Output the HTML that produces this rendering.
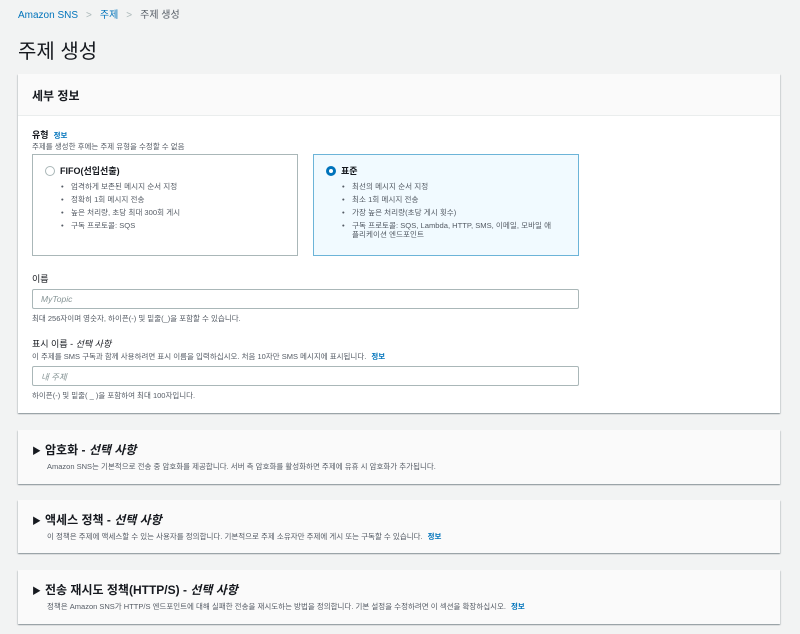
<!DOCTYPE html>
<html><head><meta charset="utf-8"><style>
*{box-sizing:border-box;margin:0;padding:0}
body{width:800px;height:634px;background:#f2f3f3;font-family:"Liberation Sans","Noto Sans CJK KR",sans-serif;color:#16191f;position:relative;overflow:hidden}
.a{position:absolute}
.bc{left:18px;top:6px;font-size:10px;color:#545b64}
.bc .l{color:#0073bb}
.bc .s{color:#aab7b8;margin:0 8px}
h1{position:absolute;left:18px;top:35px;font-size:20px;font-weight:400}
.panel{position:absolute;left:18px;width:762px;background:#fff;box-shadow:0 1px 1px rgba(0,28,36,.3),1px 1px 1px rgba(0,28,36,.1),-1px 1px 1px rgba(0,28,36,.1)}
.hd{height:42px;border-bottom:1px solid #eaeded;padding:13px 14px;font-size:12px;font-weight:700;background:#fafafa}
.lbl{font-size:9px;font-weight:700;color:#16191f}
.desc{font-size:7.5px;color:#545b64}
.info{color:#0073bb;font-weight:700;font-size:7.5px;margin-left:5px}
.card{position:absolute;top:154px;width:266px;height:102px;border:1px solid #aab7b8;background:#fff}
.card.sel{border-color:#6cb4d8;background:#f1faff}
.card .t{position:absolute;left:27px;top:9px;font-size:9px;font-weight:700}
.card ul{position:absolute;left:28px;top:27px;right:12px;font-size:7.6px;color:#545b64;list-style:none;line-height:9px}
.card li{margin-bottom:4px;padding-left:10px;position:relative}
.card li:before{content:"•";position:absolute;left:0}
.rad{position:absolute;left:12px;top:11px;width:10px;height:10px;border-radius:50%;border:1px solid #aab7b8;background:#fff}
.sel .rad{border:3px solid #0073bb}
.inp{position:absolute;left:32px;width:547px;height:20px;border:1px solid #aab7b8;border-radius:2px;background:#fff;font-size:8.5px;font-style:italic;color:#879596;padding:4px 8px}
.cp{position:absolute;left:18px;width:762px;background:#fafafa;box-shadow:0 1px 1px rgba(0,28,36,.3),1px 1px 1px rgba(0,28,36,.1),-1px 1px 1px rgba(0,28,36,.1)}
.cp .t{position:absolute;left:14px;top:11px;font-size:12px;font-weight:700}
.cp .t i{font-style:italic}
.cp .t .tri{font-size:9px;margin-right:4px}
.cp .d{position:absolute;left:29px;font-size:7.5px;color:#545b64}
</style></head><body>
<div class="a bc"><span class="l">Amazon SNS</span><span class="s">&gt;</span><span class="l">주제</span><span class="s">&gt;</span>주제 생성</div>
<h1>주제 생성</h1>
<div class="panel" style="top:74px;height:339px">
<div class="hd">세부 정보</div>
</div>
<div class="a lbl" style="left:32px;top:128px">유형<span class="info">정보</span></div>
<div class="a desc" style="left:32px;top:141px">주제를 생성한 후에는 주제 유형을 수정할 수 없음</div>
<div class="card" style="left:32px"><div class="rad"></div><div class="t">FIFO(선입선출)</div>
<ul><li>엄격하게 보존된 메시지 순서 지정</li><li>정확히 1회 메시지 전송</li><li>높은 처리량, 초당 최대 300회 게시</li><li>구독 프로토콜: SQS</li></ul></div>
<div class="card sel" style="left:313px"><div class="rad"></div><div class="t">표준</div>
<ul><li>최선의 메시지 순서 지정</li><li>최소 1회 메시지 전송</li><li>가장 높은 처리량(초당 게시 횟수)</li><li>구독 프로토콜: SQS, Lambda, HTTP, SMS, 이메일, 모바일 애<br>플리케이션 엔드포인트</li></ul></div>
<div class="a lbl" style="left:32px;top:272px;font-weight:400">이름</div>
<div class="inp" style="top:289px">MyTopic</div>
<div class="a desc" style="left:32px;top:313px">최대 256자이며 영숫자, 하이픈(-) 및 밑줄(_)을 포함할 수 있습니다.</div>
<div class="a lbl" style="left:32px;top:337px;font-weight:400">표시 이름 - <i>선택 사항</i></div>
<div class="a desc" style="left:32px;top:351px">이 주제를 SMS 구독과 함께 사용하려면 표시 이름을 입력하십시오. 처음 10자만 SMS 메시지에 표시됩니다.<span class="info">정보</span></div>
<div class="inp" style="top:366px">내 주제</div>
<div class="a desc" style="left:32px;top:390px">하이픈(-) 및 밑줄( _ )을 포함하여 최대 100자입니다.</div>

<div class="cp" style="top:430px;height:54px"><div class="t"><span class="tri">▶</span>암호화 - <i>선택 사항</i></div><div class="d" style="top:31px">Amazon SNS는 기본적으로 전송 중 암호화를 제공합니다. 서버 측 암호화를 활성화하면 주제에 유휴 시 암호화가 추가됩니다.</div></div>
<div class="cp" style="top:500px;height:53px"><div class="t"><span class="tri">▶</span>액세스 정책 - <i>선택 사항</i></div><div class="d" style="top:31px">이 정책은 주제에 액세스할 수 있는 사용자를 정의합니다. 기본적으로 주제 소유자만 주제에 게시 또는 구독할 수 있습니다.<span class="info">정보</span></div></div>
<div class="cp" style="top:570px;height:54px"><div class="t"><span class="tri">▶</span>전송 재시도 정책(HTTP/S) - <i>선택 사항</i></div><div class="d" style="top:31px">정책은 Amazon SNS가 HTTP/S 엔드포인트에 대해 실패한 전송을 재시도하는 방법을 정의합니다. 기본 설정을 수정하려면 이 섹션을 확장하십시오.<span class="info">정보</span></div></div>
</body></html>
